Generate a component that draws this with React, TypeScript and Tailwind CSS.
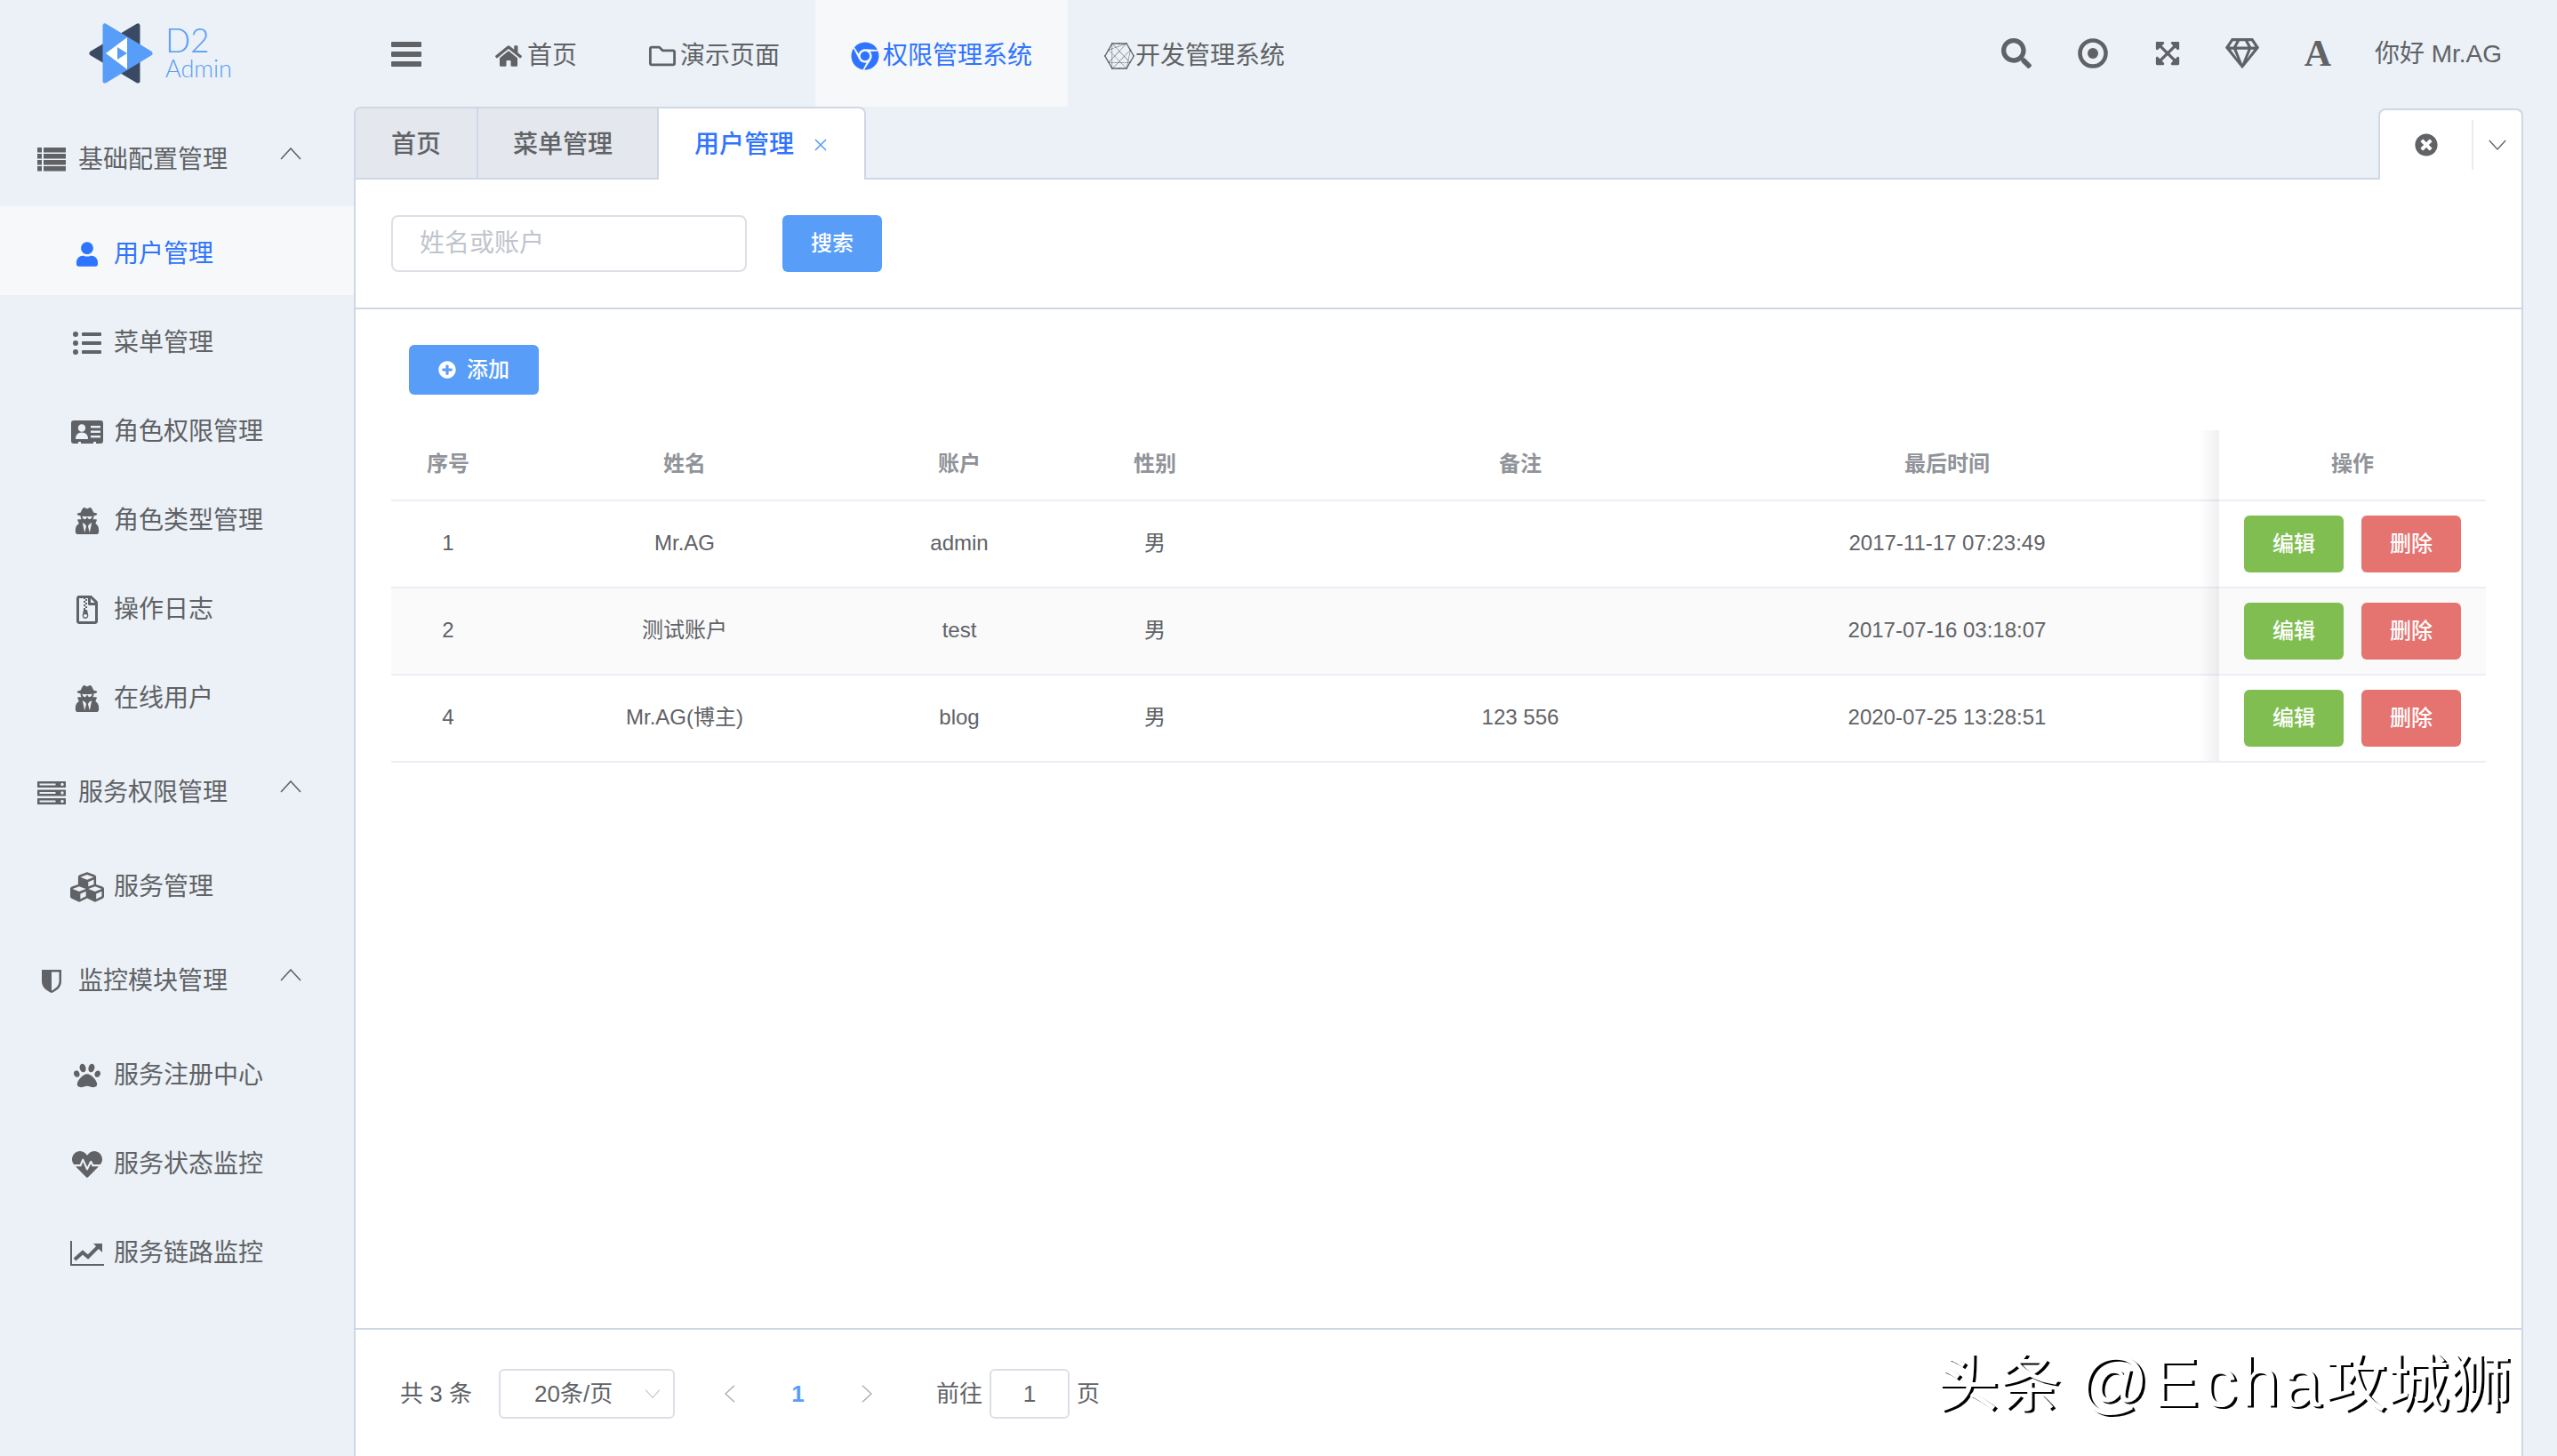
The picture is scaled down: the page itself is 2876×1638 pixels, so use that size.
import type { ReactNode } from 'react';
import {
  FaChrome, FaConnectdevelop, FaCubes, FaExpandArrowsAlt, FaHeartbeat, FaHome,
  FaListUl, FaPaw, FaPlusCircle, FaRegFileArchive, FaRegFolder, FaRegGem,
  FaSearch, FaTimesCircle, FaUser, FaUserSecret,
} from 'react-icons/fa';

// FA4 风格的图标，react-icons 里没有对应的
function ThListIcon() {
  return (
    <svg viewBox="0 0 32 28" className="w-[32px] h-[28px]" fill="currentColor">
      {[0, 7, 14, 21].map((y) => (
        <g key={y}>
          <rect x="0" y={y} width="5" height="5.5" />
          <rect x="7" y={y} width="25" height="5.5" />
        </g>
      ))}
    </svg>
  );
}

function ServerIcon() {
  return (
    <svg viewBox="0 0 32 26" className="w-[32px] h-[26px]" fill="currentColor">
      {[0, 9.5, 19].map((y) => (
        <g key={y}>
          <rect x="0" y={y} width="32" height="7" rx="0.5" />
          <rect x="2.5" y={y + 2.5} width="18" height="2" fill="#ebf1f6" />
          <circle cx="28" cy={y + 3.5} r="1.7" fill="#ebf1f6" />
        </g>
      ))}
    </svg>
  );
}

function ShieldIcon() {
  return (
    <svg viewBox="0 0 24 28" className="w-[24px] h-[28px]">
      <path d="M1 1 H23 V14 C23 21 17 25 12 27 C7 25 1 21 1 14 Z" fill="#606266" />
      <path d="M12 3.5 H20.5 V14 C20.5 19 16 22.5 12 24.5 Z" fill="#ebf1f6" />
    </svg>
  );
}

function CardIcon() {
  return (
    <svg viewBox="0 0 36 26" className="w-[36px] h-[26px]">
      <path
        d="M3 0 H33 Q36 0 36 3 V23 Q36 26 33 26 H28 V24 H25 V26 H11 V24 H8 V26 H3 Q0 26 0 23 V3 Q0 0 3 0 Z"
        fill="#606266"
      />
      <circle cx="12" cy="8.5" r="4.2" fill="#ebf1f6" />
      <path d="M5 21 Q5 13.5 12 13.5 Q19 13.5 19 21 Z" fill="#ebf1f6" />
      <rect x="22" y="6" width="11" height="2.4" fill="#ebf1f6" />
      <rect x="22" y="11.5" width="11" height="2.4" fill="#ebf1f6" />
      <rect x="22" y="17" width="11" height="2.4" fill="#ebf1f6" />
    </svg>
  );
}

function LineChartIcon() {
  return (
    <svg viewBox="0 0 38 28" className="w-[38px] h-[28px]" fill="none" stroke="currentColor">
      <path d="M1 0 V27 H38" strokeWidth="2" />
      <path d="M5 21 L14 13 L20 18 L32 6" strokeWidth="4" />
      <path d="M26 3 H36 V13 Z" fill="currentColor" stroke="none" />
    </svg>
  );
}

function BarsIcon() {
  return (
    <svg viewBox="0 0 34 28" className="w-[34px] h-[28px] ml-[42px] mt-[2px] text-[#606266]" fill="currentColor">
      <rect x="0" y="0" width="34" height="6" rx="1" />
      <rect x="0" y="11" width="34" height="6" rx="1" />
      <rect x="0" y="22" width="34" height="6" rx="1" />
    </svg>
  );
}

function TargetIcon() {
  return (
    <svg viewBox="0 0 34 34" className="w-[34px] h-[34px] ml-[52px]">
      <circle cx="17" cy="17" r="14.5" fill="none" stroke="currentColor" strokeWidth="4.6" />
      <circle cx="17" cy="17" r="6" fill="currentColor" />
    </svg>
  );
}

const MENU = [
  {
    label: '基础配置管理',
    icon: <ThListIcon />,
    items: [
      { label: '用户管理', icon: <FaUser className="w-[24px] h-[28px]" />, active: true },
      { label: '菜单管理', icon: <FaListUl className="w-[32px] h-[32px]" /> },
      { label: '角色权限管理', icon: <CardIcon /> },
      { label: '角色类型管理', icon: <FaUserSecret className="w-[28px] h-[30px]" /> },
      { label: '操作日志', icon: <FaRegFileArchive className="w-[30px] h-[32px]" /> },
      { label: '在线用户', icon: <FaUserSecret className="w-[28px] h-[30px]" /> },
    ],
  },
  {
    label: '服务权限管理',
    icon: <ServerIcon />,
    items: [{ label: '服务管理', icon: <FaCubes className="w-[42px] h-[38px]" /> }],
  },
  {
    label: '监控模块管理',
    icon: <ShieldIcon />,
    items: [
      { label: '服务注册中心', icon: <FaPaw className="w-[30px] h-[30px]" /> },
      { label: '服务状态监控', icon: <FaHeartbeat className="w-[34px] h-[34px]" /> },
      { label: '服务链路监控', icon: <LineChartIcon /> },
    ],
  },
];

const ROWS = [
  { id: '1', name: 'Mr.AG', account: 'admin', sex: '男', note: '', time: '2017-11-17 07:23:49' },
  { id: '2', name: '测试账户', account: 'test', sex: '男', note: '', time: '2017-07-16 03:18:07' },
  { id: '4', name: 'Mr.AG(博主)', account: 'blog', sex: '男', note: '123 556', time: '2020-07-25 13:28:51' },
];

function Chevron({ dir, className }: { dir: 'up' | 'down' | 'left' | 'right'; className: string }) {
  const points = {
    up: '1,13 12,1 23,13',
    down: '1,1 12,13 23,1',
    left: '13,1 1,12 13,23',
    right: '1,1 13,12 1,23',
  }[dir];
  const box = dir === 'up' || dir === 'down' ? '0 0 24 14' : '0 0 14 24';
  return (
    <svg viewBox={box} className={className} fill="none" stroke="currentColor" strokeWidth="1.6">
      <polyline points={points} />
    </svg>
  );
}

function Logo() {
  return (
    <div className="w-[398px] shrink-0 flex items-center pl-[100px]">
      <svg viewBox="0 0 72 68" className="w-[72px] h-[68px]">
        <polygon points="3,34 55,3 55,65" fill="#3a4a63" stroke="#3a4a63" strokeWidth="5" strokeLinejoin="round" />
        <polygon points="18,3 18,65 69,34" fill="#589df8" stroke="#589df8" strokeWidth="5" strokeLinejoin="round" />
        <polygon points="19,34 43,16 43,52" fill="#ffffff" />
        <polygon points="32,27 43,34 32,41" fill="#589df8" />
      </svg>
      <div className="ml-[14px] flex flex-col gap-[2px] font-['Lato','Noto_Sans',sans-serif] font-light text-[#589df8]">
        <span className="text-[37px] leading-[32px]">D2</span>
        <span className="text-[27px] leading-[28px]">Admin</span>
      </div>
    </div>
  );
}

function TopNav({ icon, label, active, gap }: { icon: ReactNode; label: string; active?: boolean; gap: string }) {
  return (
    <div className={`h-[120px] flex items-center pt-[6px] px-[40px] text-[28px] ${gap} ${active ? 'bg-[#f6f8fa] text-[#2f74ff]' : 'text-[#606266]'}`}>
      {icon}
      <span>{label}</span>
    </div>
  );
}

function Sidebar() {
  return (
    <aside className="w-[398px] shrink-0 text-[28px] text-[#606266]">
      {MENU.map((group) => (
        <div key={group.label}>
          <div className="h-[112px] flex items-center pl-[42px] pt-[8px]">
            <span className="w-[32px] flex justify-center">{group.icon}</span>
            <span className="ml-[14px]">{group.label}</span>
            <Chevron dir="up" className="w-[24px] h-[14px] ml-[59px] -mt-[14px]" />
          </div>
          {group.items.map((item) => (
            <div
              key={item.label}
              className={`h-[100px] flex items-center pt-[8px] ${'active' in item && item.active ? 'bg-[#f6f8fa] text-[#2f74ff]' : ''}`}
            >
              <span className="w-[128px] pl-[76px] pr-[8px] flex justify-center shrink-0">{item.icon}</span>
              <span>{item.label}</span>
            </div>
          ))}
        </div>
      ))}
    </aside>
  );
}

function Tabs() {
  return (
    <div className="h-[82px] shrink-0 flex justify-between border-b-2 border-[#cfd7e5]">
      <div className="h-[82px] flex rounded-t-[8px] border-2 border-b-0 border-[#cfd7e5] text-[28px] font-medium text-[#606266] overflow-hidden">
        <div className="h-[80px] flex items-center pt-[4px] px-[40px] bg-[#e4e8ee] border-b-2 border-r-2 border-[#cfd7e5]">首页</div>
        <div className="h-[80px] flex items-center pt-[4px] pl-[39px] pr-[50px] bg-[#e4e8ee] border-b-2 border-r-2 border-[#cfd7e5]">菜单管理</div>
        <div className="h-[80px] flex items-center pt-[2px] pl-[40px] bg-white text-[#2f74ff]">
          用户管理
          <span className="ml-[23px] mr-[42px] text-[#589df8]">
            <svg viewBox="0 0 14 14" className="w-[14px] h-[14px]" fill="none" stroke="currentColor" strokeWidth="1.6">
              <path d="M1 1 L13 13 M13 1 L1 13" />
            </svg>
          </span>
        </div>
      </div>
      <div className="h-[80px] w-[163px] flex items-center bg-white rounded-t-[8px] border-2 border-b-0 border-[#cfd7e5] mt-[2px] relative">
        <div className="w-[105px] h-[56px] flex items-center justify-center border-r-2 border-[#e8ebf0] text-[#606266]">
          <FaTimesCircle className="w-[26px] h-[26px]" />
        </div>
        <div className="flex-1 flex justify-center text-[#606266]">
          <Chevron dir="down" className="w-[20px] h-[12px]" />
        </div>
      </div>
    </div>
  );
}

function Table() {
  const cell = 'flex items-center justify-center pb-[3px]';
  return (
    <div className="flex mx-[40px] w-[2356px] text-[24px] text-[#606266]">
      <div className="w-[2056px]">
        <div className="h-[80px] grid grid-cols-[128px_404px_214px_226px_596px_364px_124px] border-b-2 border-[#ebeef5] font-bold text-[#909399]">
          {['序号', '姓名', '账户', '性别', '备注', '最后时间', ''].map((h) => (
            <div key={h} className={cell}>{h}</div>
          ))}
        </div>
        {ROWS.map((r) => (
          <div
            key={r.id}
            className={`h-[98px] grid grid-cols-[128px_404px_214px_226px_596px_364px_124px] border-b-2 border-[#ebeef5] ${r.id === '2' ? 'bg-[#fafafa]' : ''}`}
          >
            <div className={cell}>{r.id}</div>
            <div className={cell}>{r.name}</div>
            <div className={cell}>{r.account}</div>
            <div className={cell}>{r.sex}</div>
            <div className={cell}>{r.note}</div>
            <div className={cell}>{r.time}</div>
          </div>
        ))}
      </div>
      <div className="w-[300px] relative bg-white">
        {/* 固定列左侧阴影 */}
        <div className="absolute -left-[22px] top-0 bottom-[2px] w-[22px] bg-linear-to-l from-[rgba(0,0,0,0.06)] to-transparent" />
        <div className="h-[80px] pb-[2px] flex items-center justify-center border-b-2 border-[#ebeef5] font-bold text-[#909399]">操作</div>
        {ROWS.map((r) => (
          <div
            key={r.id}
            className={`h-[98px] flex items-start pt-[16px] pl-[28px] gap-[20px] border-b-2 border-[#ebeef5] ${r.id === '2' ? 'bg-[#fafafa]' : ''}`}
          >
            <button className="w-[112px] h-[64px] rounded-[6px] bg-[#80be52] text-white font-medium">编辑</button>
            <button className="w-[112px] h-[64px] rounded-[6px] bg-[#e57370] text-white font-medium">删除</button>
          </div>
        ))}
      </div>
    </div>
  );
}

function Pager() {
  return (
    <div className="h-[144px] shrink-0 border-t-2 border-[#cfd7e5] flex items-center pt-[2px] pl-[50px] text-[26px] text-[#606266] relative">
      <span className="w-[111px]">共 3 条</span>
      <div className="w-[198px] h-[56px] flex items-center border-2 border-[#dcdfe6] rounded-[6px] pl-[38px] relative">
        20条/页
        <Chevron dir="down" className="absolute right-[14px] top-[21px] w-[18px] h-[10px] text-[#c0c4cc]" />
      </div>
      <Chevron dir="left" className="w-[12px] h-[20px] ml-[56px] text-[#a8abb2]" />
      <span className="w-[77px] text-center font-bold text-[#589df8] ml-[32px] mr-[-4px]">1</span>
      <Chevron dir="right" className="w-[12px] h-[20px] ml-[37px] text-[#a8abb2]" />
      <span className="ml-[72px]">前往</span>
      <input
        readOnly
        value="1"
        className="w-[90px] h-[56px] ml-[8px] mr-[8px] border-2 border-[#dcdfe6] rounded-[6px] text-center text-[26px] outline-none"
      />
      <span>页</span>
      {/* 水印 */}
      <span className="absolute left-[1778px] top-[14px] text-[70px] leading-[90px] text-white [text-shadow:3px_2px_0_#000] whitespace-nowrap">
        头条 <span className="text-[78px] tracking-[4px]">@Echa</span>攻城狮
      </span>
    </div>
  );
}

export default function App() {
  return (
    <div className="h-[1638px] overflow-hidden flex flex-col bg-[#ebf1f6] font-['Liberation_Sans','Noto_Sans_CJK_SC',sans-serif]">
      <header className="h-[120px] shrink-0 flex items-center">
        <Logo />
        <BarsIcon />
        <div className="flex ml-[43px]">
          <TopNav icon={<FaHome className="w-[30px] h-[30px]" />} label="首页" gap="gap-[6px]" />
          <TopNav icon={<FaRegFolder className="w-[32px] h-[30px]" />} label="演示页面" gap="gap-[4px]" />
          <TopNav icon={<FaChrome className="w-[32px] h-[32px]" />} label="权限管理系统" active gap="gap-[4px]" />
          <TopNav icon={<FaConnectdevelop className="w-[36px] h-[36px]" />} label="开发管理系统" gap="gap-0" />
        </div>
        <div className="ml-auto mr-[62px] flex items-center text-[#606266]">
          <FaSearch className="w-[34px] h-[34px]" />
          <TargetIcon />
          <FaExpandArrowsAlt className="w-[30px] h-[30px] ml-[52px]" />
          <FaRegGem className="w-[38px] h-[34px] ml-[50px]" />
          <span className="w-[32px] ml-[50px] text-center font-['Liberation_Serif',serif] font-bold text-[42px] leading-[42px]">A</span>
          <span className="text-[28px] ml-[48px] pt-[2px]">你好 Mr.AG</span>
        </div>
      </header>
      <div className="flex-1 flex min-h-0">
        <Sidebar />
        <main className="w-[2440px] flex flex-col">
          <Tabs />
          <div className="flex-1 flex flex-col min-h-0 bg-white border-x-2 border-[#cfd7e5]">
            <div className="h-[146px] shrink-0 flex items-start gap-[40px] pt-[40px] pl-[40px] border-b-2 border-[#cfd7e5]">
              <input
                placeholder="姓名或账户"
                className="w-[400px] h-[64px] px-[30px] rounded-[8px] border-2 border-[#dcdfe6] text-[28px] outline-none placeholder:text-[#c0c4cc]"
              />
              <button className="w-[112px] h-[64px] rounded-[6px] bg-[#589df8] text-white text-[24px] font-medium">搜索</button>
            </div>
            <div className="flex-1 min-h-0">
              <button className="mt-[40px] ml-[60px] w-[146px] h-[56px] rounded-[6px] bg-[#589df8] text-white text-[24px] font-medium flex items-center justify-center gap-[12px]">
                <FaPlusCircle className="w-[20px] h-[20px]" />
                添加
              </button>
              <div className="mt-[40px]">
                <Table />
              </div>
            </div>
            <Pager />
          </div>
        </main>
      </div>
    </div>
  );
}
